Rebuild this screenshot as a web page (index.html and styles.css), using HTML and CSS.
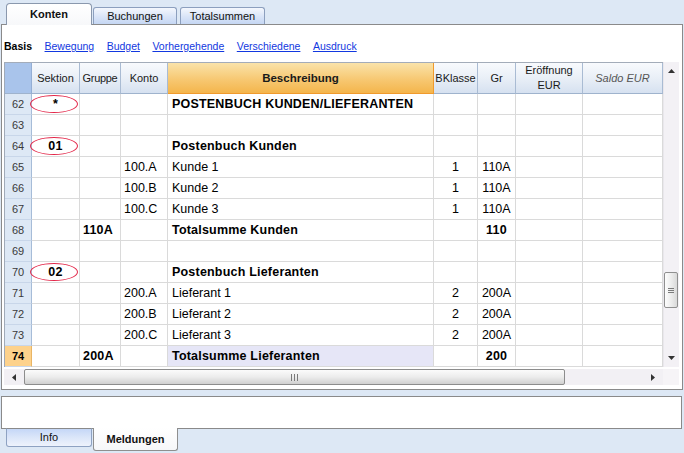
FILE: index.html
```html
<!DOCTYPE html>
<html lang="de">
<head>
  <meta charset="UTF-8">
  <title>Konten</title>
  <link rel="stylesheet" href="styles.css">
</head>
<body>
  <div class="tabstrip">
    <div class="tab active t-konten">Konten</div>
    <div class="tab t-buch">Buchungen</div>
    <div class="tab t-total">Totalsummen</div>
  </div>

  <div class="panel">
    <div class="views">
      <b>Basis</b>
      <a href="#">Bewegung</a>
      <a href="#">Budget</a>
      <a href="#">Vorhergehende</a>
      <a href="#">Verschiedene</a>
      <a href="#">Ausdruck</a>
    </div>

    <div class="grid-wrap">
      <div class="sheet">
        <div class="row head">
          <div class="h-num"></div>
          <div>Sektion</div>
          <div class="h-grp">Gruppe</div>
          <div>Konto</div>
          <div class="h-desc">Beschreibung</div>
          <div>BKlasse</div>
          <div>Gr</div>
          <div>Eröffnung<br>EUR</div>
          <div class="h-saldo">Saldo EUR</div>
        </div>

        <div class="row bold">
          <div class="num">62</div><div class="sek"><span class="mark"></span>*</div><div></div><div></div>
          <div class="desc">POSTENBUCH KUNDEN/LIEFERANTEN</div><div></div><div></div><div></div><div></div>
        </div>
        <div class="row">
          <div class="num">63</div><div></div><div></div><div></div><div></div><div></div><div></div><div></div><div></div>
        </div>
        <div class="row bold">
          <div class="num">64</div><div class="sek"><span class="mark"></span>01</div><div></div><div></div>
          <div class="desc">Postenbuch Kunden</div><div></div><div></div><div></div><div></div>
        </div>
        <div class="row">
          <div class="num">65</div><div></div><div></div><div>100.A</div>
          <div class="desc">Kunde 1</div><div class="mid">1</div><div class="mid">110A</div><div></div><div></div>
        </div>
        <div class="row">
          <div class="num">66</div><div></div><div></div><div>100.B</div>
          <div class="desc">Kunde 2</div><div class="mid">1</div><div class="mid">110A</div><div></div><div></div>
        </div>
        <div class="row">
          <div class="num">67</div><div></div><div></div><div>100.C</div>
          <div class="desc">Kunde 3</div><div class="mid">1</div><div class="mid">110A</div><div></div><div></div>
        </div>
        <div class="row bold">
          <div class="num">68</div><div></div><div>110A</div><div></div>
          <div class="desc">Totalsumme Kunden</div><div></div><div class="mid">110</div><div></div><div></div>
        </div>
        <div class="row">
          <div class="num">69</div><div></div><div></div><div></div><div></div><div></div><div></div><div></div><div></div>
        </div>
        <div class="row bold">
          <div class="num">70</div><div class="sek"><span class="mark"></span>02</div><div></div><div></div>
          <div class="desc">Postenbuch Lieferanten</div><div></div><div></div><div></div><div></div>
        </div>
        <div class="row">
          <div class="num">71</div><div></div><div></div><div>200.A</div>
          <div class="desc">Lieferant 1</div><div class="mid">2</div><div class="mid">200A</div><div></div><div></div>
        </div>
        <div class="row">
          <div class="num">72</div><div></div><div></div><div>200.B</div>
          <div class="desc">Lieferant 2</div><div class="mid">2</div><div class="mid">200A</div><div></div><div></div>
        </div>
        <div class="row">
          <div class="num">73</div><div></div><div></div><div>200.C</div>
          <div class="desc">Lieferant 3</div><div class="mid">2</div><div class="mid">200A</div><div></div><div></div>
        </div>
        <div class="row bold current">
          <div class="num">74</div><div></div><div>200A</div><div></div>
          <div class="desc">Totalsumme Lieferanten</div><div></div><div class="mid">200</div><div></div><div></div>
        </div>
      </div>

      <div class="vscroll">
        <div class="vbtn">
          <svg width="7" height="4" viewBox="0 0 7 4"><polygon points="0,4 3.5,0 7,4" fill="#333"/></svg>
        </div>
        <div class="vthumb">
          <svg width="6" height="5" viewBox="0 0 6 5">
            <rect x="0" y="0" width="6" height="1" fill="#7a7a7a"/>
            <rect x="0" y="2" width="6" height="1" fill="#7a7a7a"/>
            <rect x="0" y="4" width="6" height="1" fill="#7a7a7a"/>
          </svg>
        </div>
        <div class="vbtn down">
          <svg width="7" height="4" viewBox="0 0 7 4"><polygon points="0,0 3.5,4 7,0" fill="#333"/></svg>
        </div>
      </div>
    </div>

    <div class="hscroll">
      <div class="htrack">
        <div class="hbtn">
          <svg width="4" height="7" viewBox="0 0 4 7"><polygon points="4,0 0,3.5 4,7" fill="#333"/></svg>
        </div>
        <div class="hthumb">
          <svg width="7" height="7" viewBox="0 0 7 7">
            <rect x="0" y="0" width="1" height="7" fill="#7a7a7a"/>
            <rect x="3" y="0" width="1" height="7" fill="#7a7a7a"/>
            <rect x="6" y="0" width="1" height="7" fill="#7a7a7a"/>
          </svg>
        </div>
        <div class="hbtn right">
          <svg width="4" height="7" viewBox="0 0 4 7"><polygon points="0,0 4,3.5 0,7" fill="#333"/></svg>
        </div>
      </div>
      <div class="corner"></div>
    </div>
  </div>

  <div class="msgbox"></div>
  <div class="bottomtabs">
    <div class="btab">Info</div>
    <div class="btab active">Meldungen</div>
  </div>
</body>
</html>
```

FILE: styles.css
```css
body {
  margin: 0;
  width: 684px;
  height: 453px;
  overflow: hidden;
  background-color: #dde8f5;
  font-family: "Liberation Sans", Arial, sans-serif;
  color: #000;
}

/* Reiter oben */
.tabstrip {
  display: flex;
  align-items: flex-end;
  height: 24px;
  padding-left: 6px;
  gap: 1px;
}
.tab {
  box-sizing: border-box;
  height: 17px;
  border: 1px solid #8c9fbe;
  border-bottom: none;
  border-radius: 3px 3px 0 0;
  background: linear-gradient(#f4f7fd, #d9e4f7 55%, #c5d7f4);
  font-size: 11px;
  line-height: 16px;
  text-align: center;
  color: #111;
}
.tab.active {
  height: 22px;
  margin-bottom: -1px;
  position: relative;
  z-index: 1;
  border-color: #8a98ad;
  border-radius: 4px 4px 0 0;
  background: linear-gradient(#fff, #f7f8fa);
  font-weight: bold;
  line-height: 20px;
}
.t-konten { width: 86px; }
.t-buch { width: 84px; }
.t-total { width: 85px; margin-left: 2px; }

.panel {
  box-sizing: border-box;
  height: 366px;
  margin: 0 1px;
  border: 1px solid #8a8a8a;
  background-color: #fff;
}

/* Ansichten */
.views {
  box-sizing: border-box;
  height: 37px;
  padding: 5px 0 0 2px;
  display: flex;
  align-items: center;
  gap: 12.5px;
  font-size: 10.5px;
}
.views a {
  color: #1238e0;
  text-decoration: underline;
}

/* Tabelle */
.grid-wrap {
  display: flex;
  margin-left: 2px;
}
.sheet {
  box-sizing: border-box;
  width: 659px;
  border-left: 1px solid #a0aab8;
  border-top: 1px solid #a3acb9;
}
.row {
  display: grid;
  grid-template-columns: 27px 48px 41px 47px 266px 44px 38px 67px 80px;
  height: 21px;
}
.row > div {
  box-sizing: border-box;
  padding: 0 3px;
  border-right: 1px solid #dadada;
  border-bottom: 1px solid #dadada;
  font-size: 12.5px;
  line-height: 20px;
  white-space: nowrap;
  overflow: hidden;
}
.row.bold > div {
  font-weight: bold;
  letter-spacing: 0.2px;
}
.row .num {
  background-color: #dde8f5;
  border-right-color: #a6bcd8;
  border-bottom-color: #c8d6e9;
  text-align: center;
  font-size: 11px;
  font-weight: normal !important;
  letter-spacing: 0 !important;
  color: #3a3a3a;
}
.row .desc {
  padding-left: 4px;
}
.row .mid {
  text-align: center;
  padding: 0;
}
.row .sek {
  position: relative;
  text-align: center;
  overflow: visible;
}
.mark {
  position: absolute;
  left: -2px;
  top: 1px;
  width: 48px;
  height: 18px;
  box-sizing: border-box;
  border: 1px solid #e3284a;
  border-radius: 50%;
}
.row.current .num {
  background-color: #fdd28c;
  border-right-color: #e9b565;
  font-weight: bold !important;
  color: #000;
}
.row.current .desc {
  background-color: #e6e6f7;
}

/* Kopfzeile */
.row.head {
  height: 31px;
}
.row.head > div {
  display: flex;
  align-items: center;
  justify-content: center;
  padding: 0;
  text-align: center;
  border-right-color: #a9bbd3;
  border-bottom-color: #9fb3cd;
  background: linear-gradient(#f8fafd, #e9eff7 50%, #d6e1f0);
  font-size: 11px;
  line-height: 15px;
  color: #1a1a1a;
}
.row.head .h-grp {
  letter-spacing: -0.3px;
}
.row.head .h-num {
  background: #a9c4eb;
  border-right-color: #94aed4;
}
.row.head .h-desc {
  background: linear-gradient(#fae3aa, #f7c872 55%, #f4b54c);
  border-right-color: #f09a2c;
  border-bottom-color: #f09a2c;
  font-weight: bold;
  font-size: 11.5px;
}
.row.head .h-saldo {
  font-style: italic;
  color: #555;
}

/* Bildlaufleisten */
.vscroll {
  box-sizing: border-box;
  width: 16px;
  height: 305px;
  display: flex;
  flex-direction: column;
  background-color: #f3f1f5;
  border-left: 1px solid #e9e7ec;
}
.vbtn {
  height: 18px;
  display: flex;
  align-items: center;
  justify-content: center;
}
.vbtn.down {
  margin-top: auto;
}
.vthumb {
  box-sizing: border-box;
  width: 14px;
  height: 36px;
  margin-top: 192px;
  border: 1px solid #8f8f8f;
  border-radius: 2px;
  background: linear-gradient(90deg, #fdfdfd, #ededed 50%, #d9d9d9);
  display: flex;
  align-items: center;
  justify-content: center;
}
.hscroll {
  display: flex;
  height: 16px;
  margin: 2px 0 0 2px;
}
.htrack {
  width: 659px;
  display: flex;
  background-color: #f2f0f4;
}
.hbtn {
  width: 20px;
  display: flex;
  align-items: center;
  justify-content: center;
}
.hbtn.right {
  margin-left: auto;
}
.hthumb {
  box-sizing: border-box;
  width: 541px;
  border: 1px solid #8c8c8c;
  border-radius: 2px;
  background: linear-gradient(#fbfbfb, #ececec 50%, #d0d0d0);
  display: flex;
  align-items: center;
  justify-content: center;
}
.corner {
  width: 16px;
  background-color: #f6f4f7;
}

/* Meldungen */
.msgbox {
  box-sizing: border-box;
  height: 33px;
  margin: 6px 2px 0 1px;
  border: 1px solid #8a8a8a;
  background-color: #fff;
}
.bottomtabs {
  display: flex;
  align-items: flex-start;
  padding-left: 6px;
  gap: 1px;
  margin-top: -1px;
}
.btab {
  box-sizing: border-box;
  width: 86px;
  height: 19px;
  border: 1px solid #8ea2c2;
  border-top-color: #8a8a8a;
  border-radius: 0 0 3px 3px;
  background: linear-gradient(#c5d7f7, #dbe6f9 50%, #eef3fc);
  font-size: 11px;
  line-height: 17px;
  text-align: center;
  color: #111;
}
.btab.active {
  width: 85px;
  height: 23px;
  position: relative;
  z-index: 1;
  border-color: #8f8f8f;
  border-top: none;
  background: linear-gradient(#fff, #f6f7f9);
  font-weight: bold;
  line-height: 22px;
}
```
